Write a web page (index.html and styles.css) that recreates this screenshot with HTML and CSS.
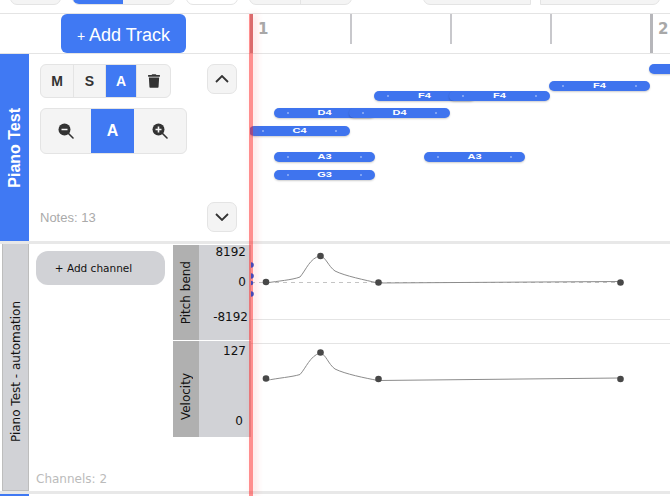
FILE: index.html
```html
<!DOCTYPE html>
<html lang="en">
<head>
    <meta charset="UTF-8">
    <title>Piano Roll</title>
    <link rel="stylesheet" href="styles.css">
</head>
<body>
    <div class="toolbar">
        <div class="tool-group w51"></div>
        <div class="tool-group">
            <div class="tool-cell w50 active"></div>
            <div class="tool-cell w51"></div>
        </div>
        <div class="tool-group w52 plain"></div>
        <div class="tool-group">
            <div class="tool-cell w51 divided"></div>
            <div class="tool-cell w50"></div>
        </div>
        <div class="tool-group square-right w108 push"></div>
        <div class="tool-group square-left w120"></div>
    </div>

    <div class="header-row">
        <div class="header-side">
            <button class="add-track"><span class="plus">+</span> Add Track</button>
        </div>
        <div class="ruler">
            <div class="beat bar">1</div>
            <div class="beat"></div>
            <div class="beat"></div>
            <div class="beat"></div>
            <div class="beat bar">2</div>
        </div>
    </div>

    <div class="track-row">
        <div class="track-label"><span class="vertical">Piano Test</span></div>
        <div class="track-side">
            <div class="track-main">
                <div class="btn-group small">
                    <button class="cell w32">M</button>
                    <button class="cell w32">S</button>
                    <button class="cell w31 active">A</button>
                    <button class="cell w34">
                        <svg width="12" height="14" viewBox="0 0 448 512"><path fill="#333" d="M432 32H312l-9.4-18.7A24 24 0 0 0 281.1 0H166.8a23.72 23.72 0 0 0-21.4 13.3L136 32H16A16 16 0 0 0 0 48v32a16 16 0 0 0 16 16h416a16 16 0 0 0 16-16V48a16 16 0 0 0-16-16zM53.2 467a48 48 0 0 0 47.9 45h245.8a48 48 0 0 0 47.9-45L416 128H32z"/></svg>
                    </button>
                </div>
                <div class="btn-group large">
                    <button class="cell w50">
                        <svg width="16" height="16" viewBox="0 0 16 16">
                            <path d="M10 10l5 5" stroke="#333" stroke-width="1.6" stroke-linecap="round"/>
                            <circle cx="6.5" cy="6.5" r="6" fill="#333"/>
                            <path d="M3.5 6.5h6" stroke="#f4f4f4" stroke-width="1.6"/>
                        </svg>
                    </button>
                    <button class="cell w43 active big">A</button>
                    <button class="cell w52">
                        <svg width="16" height="16" viewBox="0 0 16 16">
                            <path d="M10 10l5 5" stroke="#333" stroke-width="1.6" stroke-linecap="round"/>
                            <circle cx="6.5" cy="6.5" r="6" fill="#333"/>
                            <path d="M3.5 6.5h6M6.5 3.5v6" stroke="#f4f4f4" stroke-width="1.6"/>
                        </svg>
                    </button>
                </div>
                <div class="notes-count">Notes: 13</div>
            </div>
            <div class="scroll-btns">
                <button class="scroll-btn">
                    <svg width="14" height="8" viewBox="0 0 14 8"><path d="M1 7l6-6 6 6" fill="none" stroke="#333" stroke-width="1.8"/></svg>
                </button>
                <button class="scroll-btn">
                    <svg width="14" height="8" viewBox="0 0 14 8"><path d="M1 1l6 6 6-6" fill="none" stroke="#333" stroke-width="1.8"/></svg>
                </button>
            </div>
        </div>
        <div class="roll">
            <div class="note" style="left:399px;top:10px"></div>
            <div class="note" style="left:299px;top:27px"><i></i><span>F4</span><i></i></div>
            <div class="note" style="left:124px;top:37px"><i></i><span>F4</span><i></i></div>
            <div class="note" style="left:199px;top:37px"><i></i><span>F4</span><i></i></div>
            <div class="note" style="left:24px;top:54px"><i></i><span>D4</span><i></i></div>
            <div class="note" style="left:99px;top:54px"><i></i><span>D4</span><i></i></div>
            <div class="note" style="left:-1px;top:72px"><i></i><span>C4</span><i></i></div>
            <div class="note" style="left:24px;top:98px"><i></i><span>A3</span><i></i></div>
            <div class="note" style="left:174px;top:98px"><i></i><span>A3</span><i></i></div>
            <div class="note" style="left:24px;top:116px"><i></i><span>G3</span><i></i></div>
        </div>
    </div>

    <div class="row-gap"></div>

    <div class="auto-row">
        <div class="auto-label"><span class="vertical">Piano Test - automation</span></div>
        <div class="auto-side">
            <button class="add-channel">+ Add channel</button>
            <div class="channels-count">Channels: 2</div>
        </div>
        <div class="channels">
            <div class="channel">
                <div class="channel-name"><span class="vertical">Pitch bend</span></div>
                <div class="channel-values">
                    <span>8192</span>
                    <span class="mid-pitch">0</span>
                    <span class="low-pitch">-8192</span>
                </div>
            </div>
            <div class="channel velocity">
                <div class="channel-name"><span class="vertical">Velocity</span></div>
                <div class="channel-values">
                    <span>127</span>
                    <span class="low-velocity">0</span>
                </div>
            </div>
        </div>
        <div class="lanes">
            <svg class="lanes-svg" viewBox="251 244 419 247">
                <path d="M251 319.5H670M251 343.5H670" stroke="#e4e4e4"/>
                <path d="M251 282.5H621" stroke="#c4c4c4" stroke-dasharray="4 4"/>
                <g fill="none" stroke="#8c8c8c">
                    <path d="M266 283C278 281 292 280 300 277C306 270 310 258 320 256C326 257 328 266 335 271C345 276 365 280 378 283L620 281.5"/>
                    <path d="M266 380.5C278 378 292 377 300 374.5C306 368 310 356 320 353C326 354 328 364 335 369C345 374 365 378 378 380.500L620 378"/>
                </g>
                <g fill="#484848">
                    <circle cx="266" cy="282" r="3.300"/>
                    <circle cx="320.500" cy="256" r="3.300"/>
                    <circle cx="378.500" cy="282.500" r="3.300"/>
                    <circle cx="620.500" cy="282.500" r="3.300"/>
                    <circle cx="266" cy="378.500" r="3.300"/>
                    <circle cx="320.500" cy="352.500" r="3.300"/>
                    <circle cx="378.500" cy="379" r="3.300"/>
                    <circle cx="620.500" cy="379" r="3.300"/>
                </g>
            </svg>
        </div>
    </div>

    <div class="row-gap"></div>
    <div class="next-track"></div>

    <div class="playhead"></div>

    <svg class="thumbs" width="4" height="36" viewBox="0 0 4 36">
        <circle cx="0" cy="3" r="2.800"/>
        <circle cx="0" cy="14" r="2.800"/>
        <circle cx="0" cy="21" r="2.300"/>
        <circle cx="0" cy="32" r="2.800"/>
    </svg>
</body>
</html>
```

FILE: styles.css
```css
* {
    box-sizing: border-box;
}
body {
    margin: 0;
    height: 496px;
    overflow: hidden;
    position: relative;
    background-color: #fff;
    font-family: "Liberation Sans", Arial, sans-serif;
}
button {
    border: none;
    padding: 0;
    font-family: inherit;
}
.vertical {
    writing-mode: vertical-rl;
    transform: rotate(180deg);
    white-space: nowrap;
}

.toolbar {
    display: flex;
    align-items: flex-end;
    gap: 11px;
    height: 14px;
    padding: 0 10px 8px 10px;
    border-bottom: 1px solid #e4e4e4;
}
.tool-group {
    display: flex;
    flex: none;
    height: 20px;
    overflow: hidden;
    background-color: #f4f4f4;
    border: 1px solid #e4e4e4;
    border-radius: 7px;
}
.tool-cell {
    height: 100%;
}
.tool-group.plain {
    background-color: #fff;
}
.tool-cell.active {
    background-color: #4079f3;
}
.tool-cell.divided {
    border-right: 1px solid #e4e4e4;
}
.tool-group.push {
    margin-left: 60px;
}
.tool-group.square-right {
    border-top-right-radius: 0;
    border-bottom-right-radius: 0;
}
.tool-group.square-left {
    margin-left: -2px;
    border-top-left-radius: 0;
    border-bottom-left-radius: 0;
}
.w108 { width: 108px; }
.w120 { width: 120px; }
.w31 { width: 31px; }
.w32 { width: 32px; }
.w34 { width: 34px; }
.w43 { width: 43px; }
.w50 { width: 50px; }
.w51 { width: 51px; }
.w52 { width: 52px; }

.header-row {
    display: flex;
    height: 40px;
    border-bottom: 1px solid #e4e4e4;
}
.header-side {
    flex: none;
    width: 250px;
    padding-left: 61px;
}
.add-track {
    width: 125px;
    height: 39px;
    padding-top: 3px;
    background-color: #4079f3;
    color: #fff;
    font-size: 18px;
    border-radius: 6px;
}
.add-track .plus {
    font-size: 14px;
}
.ruler {
    display: flex;
    flex: 1;
    overflow: hidden;
}
.beat {
    flex: none;
    width: 100px;
    height: 30px;
    border-left: 2px solid #c8c8cc;
}
.beat.bar {
    height: 39px;
    padding: 6px 0 0 5px;
    border-left: 3px solid #b6b6ba;
    color: #a8a8a8;
    font: bold 15px "DejaVu Sans", sans-serif;
}

.track-row {
    display: flex;
    height: 187px;
}
.track-label {
    display: flex;
    flex: none;
    align-items: center;
    justify-content: center;
    width: 29px;
    background-color: #4079f3;
    color: #fff;
    font-size: 16px;
    font-weight: bold;
}
.track-side {
    display: flex;
    flex: none;
    justify-content: space-between;
    width: 221px;
    padding: 10px 13px 9px 11px;
}
.track-main {
    display: flex;
    flex-direction: column;
    align-items: flex-start;
    gap: 10px;
}
.btn-group {
    display: flex;
    overflow: hidden;
    background-color: #f4f4f4;
    border: 1px solid #e4e4e4;
    border-radius: 6px;
}
.btn-group.small {
    height: 34px;
}
.btn-group.large {
    height: 46px;
}
.cell {
    display: flex;
    align-items: center;
    justify-content: center;
    background-color: transparent;
    color: #333;
    font-size: 14px;
    font-weight: bold;
}
.small .cell + .cell {
    border-left: 1px solid #e4e4e4;
}
.cell.active {
    background-color: #4079f3;
    color: #fff;
}
.cell.big {
    font-size: 16px;
}
.notes-count {
    margin-top: auto;
    padding-bottom: 7px;
    font-size: 13px;
    color: #aaa;
}
.scroll-btns {
    display: flex;
    flex-direction: column;
    justify-content: space-between;
}
.scroll-btn {
    display: flex;
    align-items: center;
    justify-content: center;
    width: 30px;
    height: 30px;
    background-color: #f4f4f4;
    border: 1px solid #e4e4e4;
    border-radius: 7px;
}

.roll {
    flex: 1;
    position: relative;
    overflow: hidden;
}
.note {
    position: absolute;
    display: flex;
    align-items: center;
    justify-content: space-between;
    width: 101px;
    height: 10px;
    padding: 0 13px;
    overflow: hidden;
    background-color: #3f74ee;
    border-radius: 5px;
    box-shadow: 0 1px 2px rgba(0, 0, 0, 0.2);
    color: #fff;
    font-size: 11px;
    font-weight: bold;
}
.note span {
    transform: scaleY(0.6);
}
.note i {
    width: 2px;
    height: 2px;
    background-color: #7fa3f5;
}

.row-gap {
    height: 3px;
    background-color: #e8e8e8;
}

.auto-row {
    display: flex;
    height: 247px;
    font-family: "DejaVu Sans", sans-serif;
    font-size: 12px;
    color: #111;
}
.auto-label {
    display: flex;
    flex: none;
    align-items: center;
    justify-content: center;
    width: 27px;
    margin-left: 2px;
    padding-top: 10px;
    background-color: #d1d2d6;
    border: 1px solid #bdbdbd;
    border-top: none;
}
.auto-side {
    display: flex;
    flex: none;
    flex-direction: column;
    width: 144px;
    padding: 7px 7px 5px 7px;
}
.add-channel {
    width: 129px;
    height: 34px;
    padding-right: 14px;
    background-color: #d1d2d6;
    border-radius: 12px;
    font-size: 10.500px;
    color: #111;
}
.channels-count {
    margin-top: auto;
    color: #bbb;
}
.channels {
    display: flex;
    flex: none;
    flex-direction: column;
    gap: 1px;
    width: 78px;
    padding-top: 1px;
}
.channel {
    display: flex;
    height: 95px;
}
.channel.velocity {
    height: 96px;
}
.channel-name {
    display: flex;
    align-items: center;
    justify-content: center;
    width: 26px;
    background-color: #b0b0b0;
}
.velocity .channel-name {
    padding-top: 16px;
}
.channel-values {
    display: flex;
    flex-direction: column;
    align-items: flex-end;
    flex: 1;
    padding-right: 5px;
    background-color: #d1d2d6;
    line-height: 14px;
}
.velocity .channel-values {
    padding-top: 3px;
}
.mid-pitch {
    margin-top: 16px;
}
.low-pitch {
    margin-top: 21px;
    margin-right: -2px;
}
.low-velocity {
    margin-top: 56px;
    margin-right: 3px;
}
.lanes {
    flex: 1;
}
.lanes-svg {
    display: block;
    width: 100%;
    height: 100%;
    overflow: hidden;
}

.next-track {
    width: 29px;
    height: 2px;
    background-color: #4079f3;
}

.playhead {
    position: absolute;
    left: 249px;
    top: 14px;
    bottom: 0;
    width: 3.500px;
    background-color: rgba(255, 30, 30, 0.5);
    box-shadow: 3px 0 7px rgba(255, 60, 60, 0.22);
}
/* channel note markers peek out past the playhead */
.thumbs {
    position: absolute;
    left: 251px;
    top: 262px;
    fill: #4549b8;
}
```
